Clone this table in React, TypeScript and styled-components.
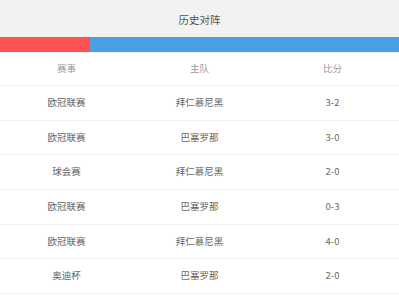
import React from 'react';
import styled, { createGlobalStyle } from 'styled-components';

interface MatchRow {
  league: string;
  home: string;
  score: string;
}

const GlobalStyle = createGlobalStyle`
  html, body {
    margin: 0;
    padding: 0;
    background: #ffffff;
  }
  body {
    font-family: "Noto Sans CJK SC", "Noto Sans", sans-serif;
  }
`;

const Wrapper = styled.section`
  width: 399px;
  background: #ffffff;
`;

const Header = styled.div`
  height: 37px;
  background: #f2f2f2;
  display: flex;
  align-items: center;
  justify-content: center;
  font-size: 10.5px;
  color: #555555;
  padding-top: 2px;
  box-sizing: border-box;
`;

const RatioBar = styled.div`
  display: flex;
  height: 15px;
  border-bottom: 1px solid #eef1f4;
`;

const Segment = styled.div<{ $color: string }>`
  background: ${(p) => p.$color};
  height: 100%;
`;

const Row = styled.div<{ $head?: boolean }>`
  display: grid;
  grid-template-columns: repeat(3, 1fr);
  align-items: center;
  height: ${(p) => (p.$head ? '33px' : '34.67px')};
  border-bottom: 1px solid #f0f0f0;
  box-sizing: border-box;
  font-size: 9.5px;
  color: ${(p) => (p.$head ? '#9a9a9a' : '#666666')};
`;

const Cell = styled.div`
  text-align: center;
  line-height: 1;
`;

const matches: MatchRow[] = [
  { league: '欧冠联赛', home: '拜仁慕尼黑', score: '3-2' },
  { league: '欧冠联赛', home: '巴塞罗那', score: '3-0' },
  { league: '球会赛', home: '拜仁慕尼黑', score: '2-0' },
  { league: '欧冠联赛', home: '巴塞罗那', score: '0-3' },
  { league: '欧冠联赛', home: '拜仁慕尼黑', score: '4-0' },
  { league: '奥迪杯', home: '巴塞罗那', score: '2-0' },
];

const App: React.FC = () => {
  const homeShare = 90 / 399;

  return (
    <>
      <GlobalStyle />
      <Wrapper>
        <Header>历史对阵</Header>
        <RatioBar>
          <Segment $color="#fe5151" style={{ width: `${homeShare * 100}%` }} />
          <Segment $color="#4b9fe4" style={{ flex: 1 }} />
        </RatioBar>
        <Row $head>
          <Cell>赛事</Cell>
          <Cell>主队</Cell>
          <Cell>比分</Cell>
        </Row>
        {matches.map((m, i) => (
          <Row key={i}>
            <Cell>{m.league}</Cell>
            <Cell>{m.home}</Cell>
            <Cell>{m.score}</Cell>
          </Row>
        ))}
      </Wrapper>
    </>
  );
};

export default App;
